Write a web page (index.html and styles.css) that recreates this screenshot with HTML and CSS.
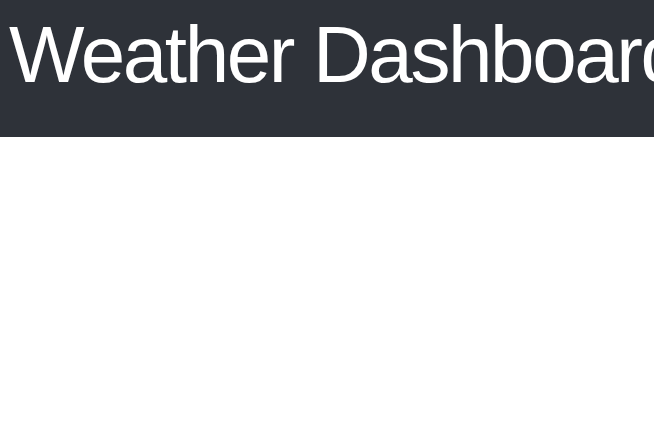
FILE: index.html
```html
<!DOCTYPE html>
<html lang="en">
<head>
<meta charset="utf-8">
<title>Weather Dashboard</title>
<link rel="stylesheet" href="styles.css">
</head>
<body>
<header class="app-header">
  <h1 class="app-title">Weather Dashboard</h1>
</header>
<main class="app-main"></main>
</body>
</html>
```
FILE: styles.css
```css
html, body {
  margin: 0;
  padding: 0;
  background: #ffffff;
  font-family: "Liberation Sans", Arial, sans-serif;
}
.app-header {
  background: #2e3239;
  color: #ffffff;
  height: 137px;
  box-sizing: border-box;
  padding: 9px 8px 0 9px;
  overflow: hidden;
  white-space: nowrap;
}
.app-title {
  margin: 0;
  font-size: 80px;
  font-weight: 400;
  line-height: normal;
  letter-spacing: -2.4px;
}
```
